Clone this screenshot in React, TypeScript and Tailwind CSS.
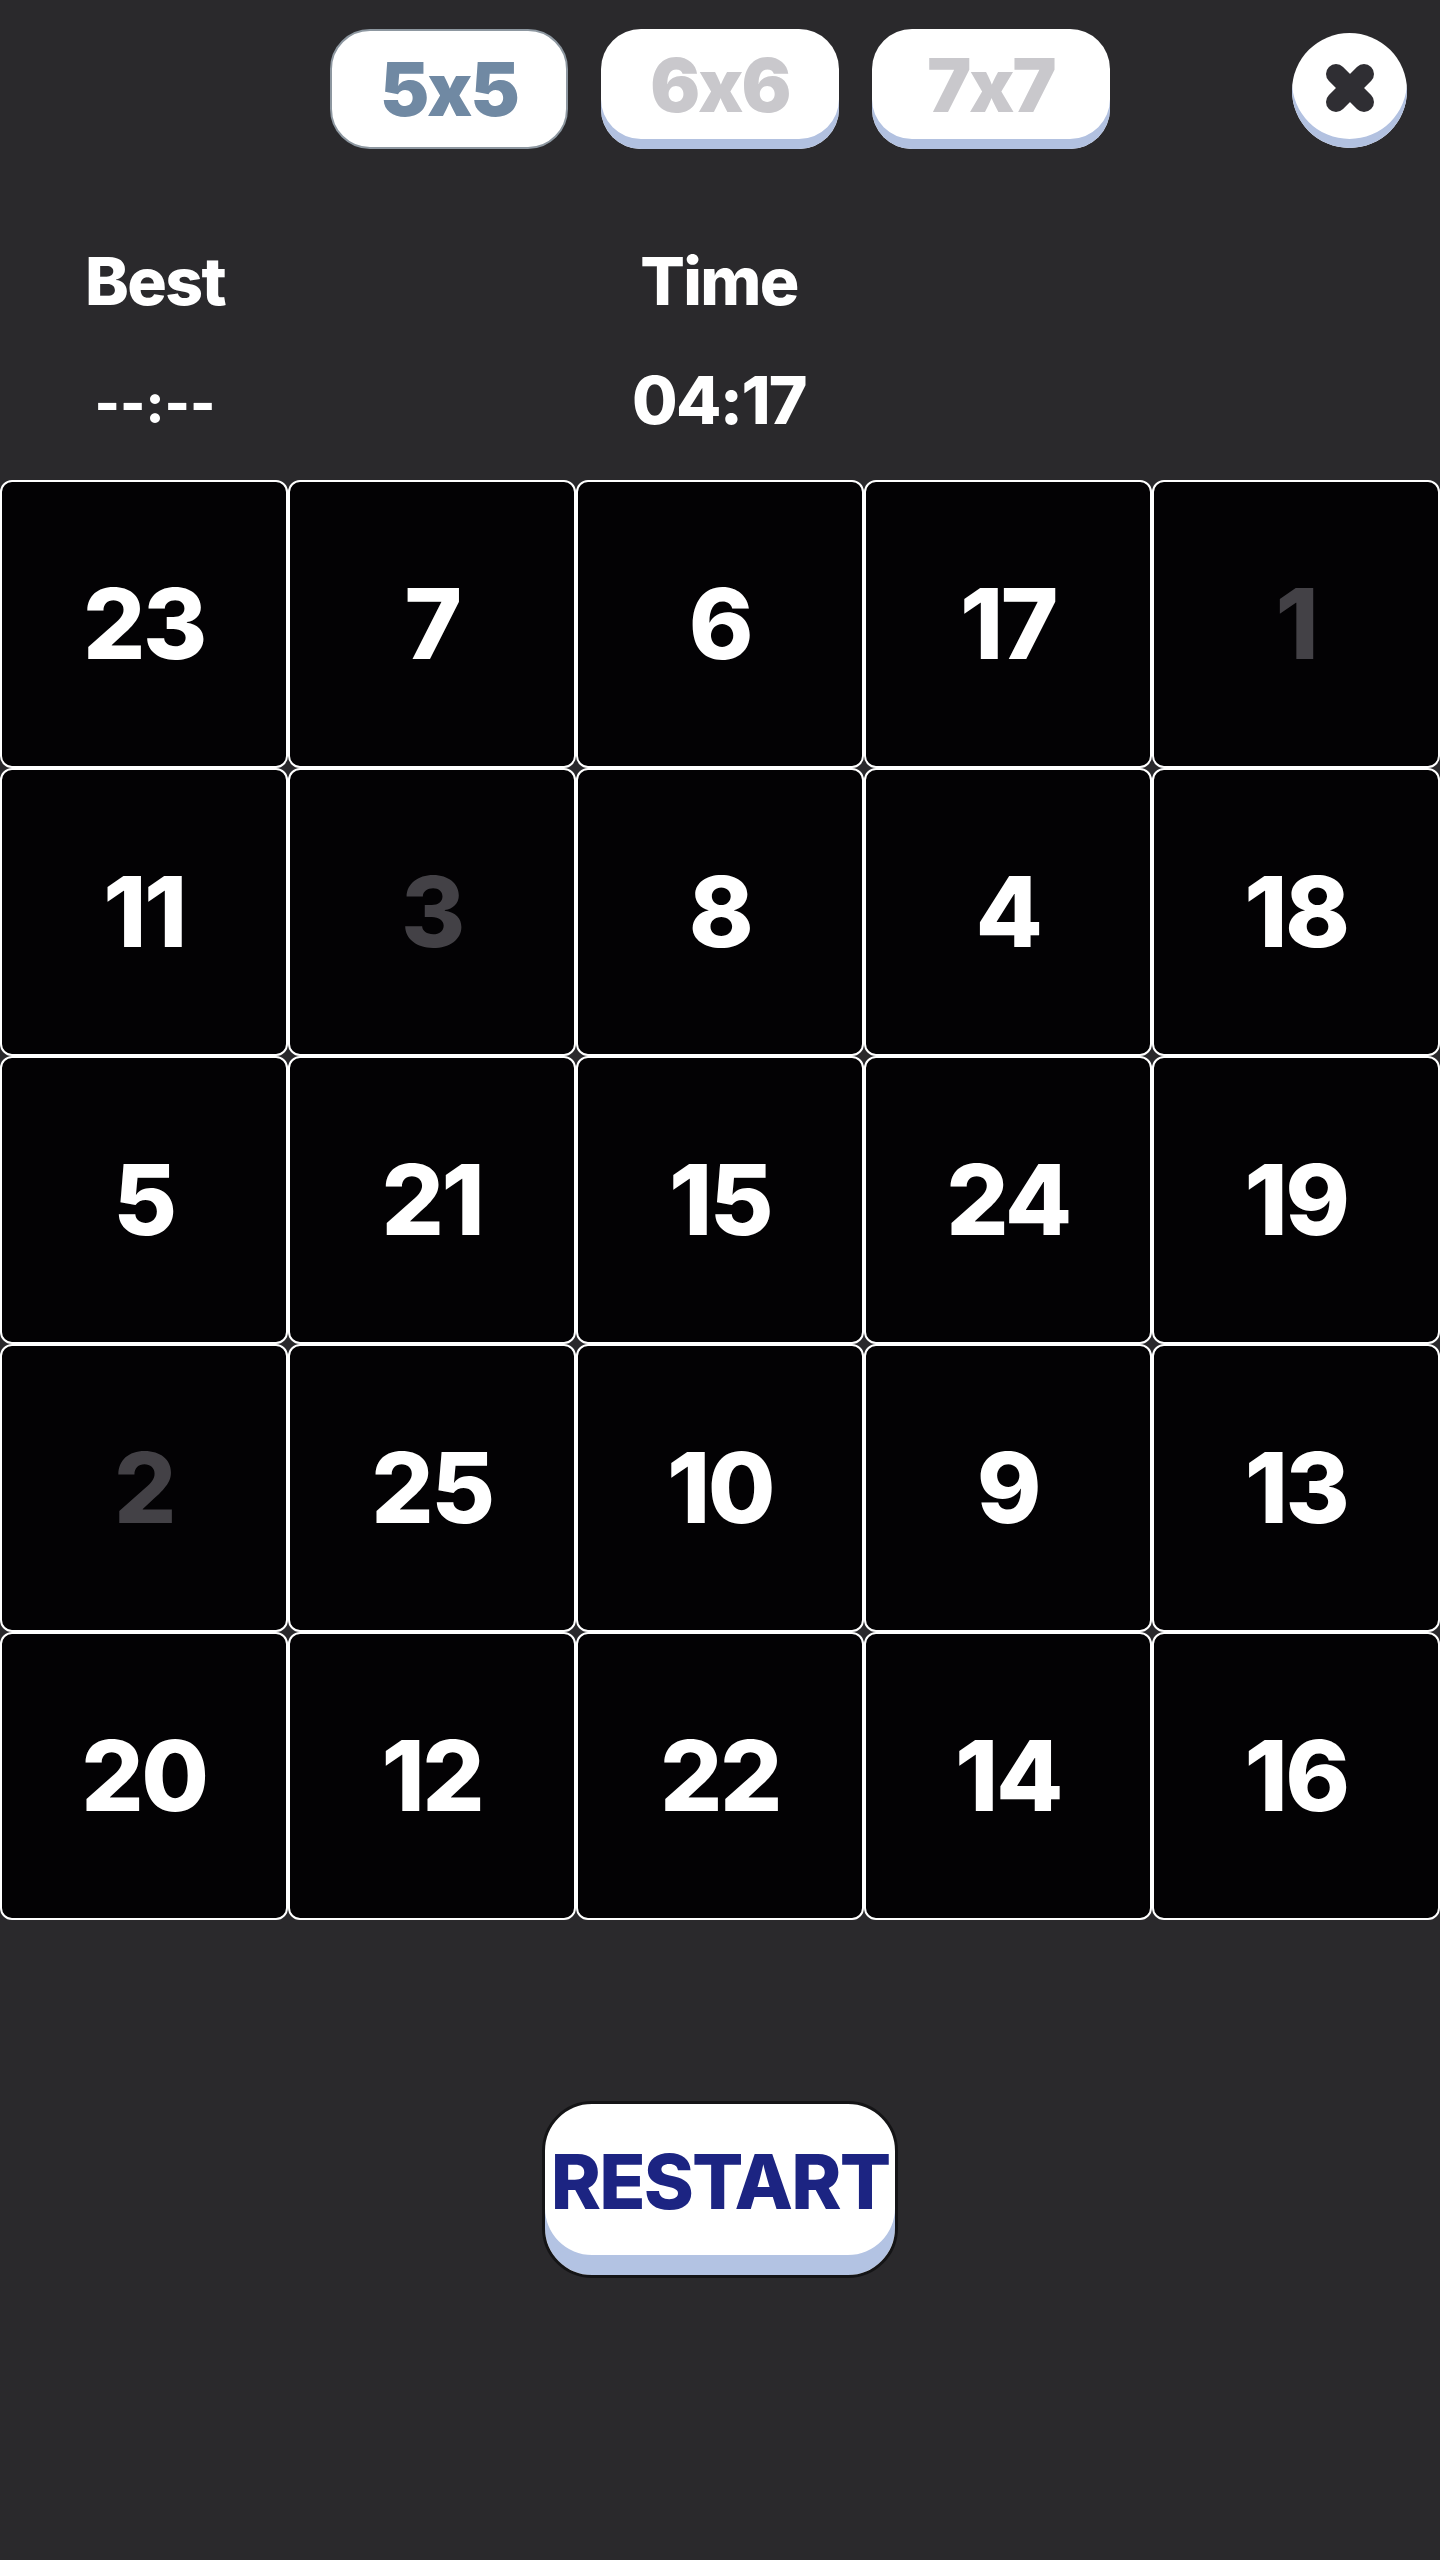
import React from "react";

const sizes = [
  { label: "5x5", active: true },
  { label: "6x6", active: false },
  { label: "7x7", active: false },
];

const tiles = [
  23, 7, 6, 17, 1,
  11, 3, 8, 4, 18,
  5, 21, 15, 24, 19,
  2, 25, 10, 9, 13,
  20, 12, 22, 14, 16,
];

const placed = [1, 3, 2];

function CloseIcon() {
  return (
    <svg width="58" height="58" viewBox="0 0 58 58">
      <g stroke="#2f2e33" strokeWidth="20" strokeLinecap="round">
        <line x1="15" y1="15" x2="43" y2="43" />
        <line x1="43" y1="15" x2="15" y2="43" />
      </g>
    </svg>
  );
}

export default function App() {
  return (
    <div className="w-[1440px] h-[2560px] bg-[#2a292c] font-['Inter',sans-serif] flex flex-col">
      {/* size picker */}
      <div className="grid grid-cols-[1fr_auto_1fr] items-start pt-[29px] h-[180px]">
        <div />
        <div className="flex gap-[33px]">
          {sizes.map((s) =>
            s.active ? (
              <button
                key={s.label}
                className="w-[238px] h-[120px] rounded-[40px] bg-white border-2 border-[#8d97a0] flex items-center justify-center text-[74px] font-black tracking-tight text-[#7089a3] leading-none"
              >
                {s.label}
              </button>
            ) : (
              <button
                key={s.label}
                className="w-[238px] h-[120px] rounded-[40px] bg-white shadow-[inset_0_-10px_0_#b2c1e0] flex items-center justify-center pb-[8px] text-[74px] font-black tracking-tight text-[#c9c8cc] leading-none"
              >
                {s.label}
              </button>
            )
          )}
        </div>
        <div className="flex justify-end pr-[33px] pt-[4px]">
          <button className="w-[115px] h-[115px] rounded-full bg-white shadow-[inset_0_-9px_0_#b2c1e0] flex items-center justify-center pb-[6px]">
            <CloseIcon />
          </button>
        </div>
      </div>

      {/* scores */}
      <div className="flex h-[300px] text-white font-extrabold">
        <div className="w-[310px] flex flex-col items-center pt-[68px]">
          <div className="text-[66px] leading-none tracking-tight">Best</div>
          <div className="text-[54px] leading-none mt-[62px]">--:--</div>
        </div>
        <div className="w-[818px] flex flex-col items-center pt-[68px]">
          <div className="text-[66px] leading-none tracking-tight">Time</div>
          <div className="text-[66px] leading-none mt-[53px] tracking-tight">04:17</div>
        </div>
      </div>

      {/* board */}
      <div className="grid grid-cols-5 w-[1440px] h-[1440px]">
        {tiles.map((n) => (
          <div
            key={n}
            className="rounded-[12px] border-2 border-white bg-[#030204] flex items-center justify-center"
          >
            <span
              className={
                "text-[98px] font-extrabold leading-none tracking-tight " +
                (placed.includes(n) ? "text-[#434146]" : "text-white")
              }
            >
              {n}
            </span>
          </div>
        ))}
      </div>

      {/* restart */}
      <div className="flex justify-center pt-[181px]">
        <button className="w-[356px] h-[177px] rounded-[50px] bg-white border-[3px] border-[#141416] shadow-[inset_0_-20px_0_#b3c3e3] flex items-center justify-center pb-[18px] text-[76px] font-extrabold tracking-tight text-[#1c2482] leading-none">
          RESTART
        </button>
      </div>
    </div>
  );
}
